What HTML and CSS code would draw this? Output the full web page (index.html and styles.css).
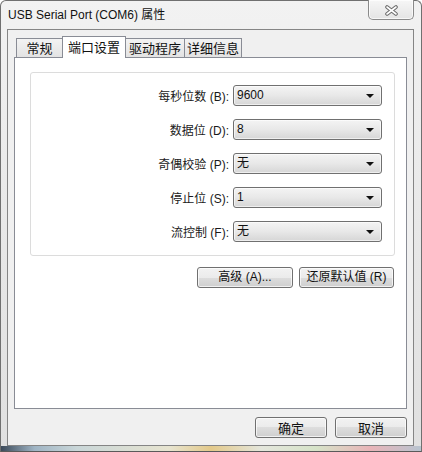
FILE: index.html
```html
<!DOCTYPE html>
<html>
<head>
<meta charset="utf-8">
<link rel="stylesheet" href="styles.css">
</head>
<body>
<div class="window">
  <div class="titlebar">
    <span class="title">USB Serial Port (COM6) 属性</span>
    <div class="close">
      <svg width="15" height="11" viewBox="0 0 15 11">
        <path d="M3 2 L12 9 M12 2 L3 9" stroke="#6a6a6a" stroke-width="3.6" stroke-linecap="round"/>
        <path d="M3 2 L12 9 M12 2 L3 9" stroke="#ffffff" stroke-width="1.6" stroke-linecap="round"/>
      </svg>
    </div>
  </div>
  <div class="client">
    <div class="tabs">
      <div class="tab t1">常规</div>
      <div class="tab t2 active">端口设置</div>
      <div class="tab t3">驱动程序</div>
      <div class="tab t4">详细信息</div>
    </div>
    <div class="page">
      <div class="panel">
        <div class="row"><span class="label">每秒位数 (B):</span><div class="combo"><span class="value">9600</span><i class="arrow"></i></div></div>
        <div class="row"><span class="label">数据位 (D):</span><div class="combo"><span class="value">8</span><i class="arrow"></i></div></div>
        <div class="row"><span class="label">奇偶校验 (P):</span><div class="combo"><span class="value">无</span><i class="arrow"></i></div></div>
        <div class="row"><span class="label">停止位 (S):</span><div class="combo"><span class="value">1</span><i class="arrow"></i></div></div>
        <div class="row"><span class="label">流控制 (F):</span><div class="combo"><span class="value">无</span><i class="arrow"></i></div></div>
      </div>
      <div class="actions">
        <button class="btn btn-adv">高级 (A)...</button>
        <button class="btn btn-reset">还原默认值 (R)</button>
      </div>
    </div>
    <div class="footer">
      <button class="btn btn-dlg">确定</button>
      <button class="btn btn-dlg">取消</button>
    </div>
  </div>
</div>
</body>
</html>
```

FILE: styles.css
```css
* { box-sizing: border-box; }

html, body {
  margin: 0;
  padding: 0;
  width: 422px;
  height: 452px;
  overflow: hidden;
  background: #ffffff;
}

body {
  font-family: "Liberation Sans", "Noto Sans CJK SC", sans-serif;
  font-size: 12px;
  color: #1a1a1a;
}

.window {
  width: 422px;
  height: 452px;
  border: 1px solid #707070;
  border-bottom-color: #5a5a5a;
  border-radius: 6px 6px 0 0;
  padding: 0 7px 5px 6px;
  background:
    linear-gradient(to right, #3c4a5a 0%, #9fb4c4 8%, #c9d6d8 18%, #e7e4d0 40%, #e3c98a 50%, #e4e6dc 62%, #d6e3c8 75%, #e8b4b8 88%, #b8c4d0 100%) bottom / 100% 5px no-repeat,
    linear-gradient(#f2f2f2, #e6e6e6 60%, #e0e0e0);
}

.titlebar {
  height: 28px;
  display: flex;
  justify-content: space-between;
  align-items: flex-start;
}

.title {
  padding-left: 1px;
  margin-top: 6px;
  font-family: "Liberation Sans", "Noto Sans CJK SC", sans-serif;
  font-size: 12px;
  line-height: 16px;
  color: #111;
}

.close {
  width: 46px;
  height: 20px;
  margin-top: -1px;
  border: 1px solid #8a8a8a;
  border-top: none;
  border-radius: 0 0 5px 5px;
  background: linear-gradient(#f6f6f6, #e4e4e4);
  box-shadow: inset 0 0 0 1px rgba(255,255,255,0.7);
  display: flex;
  align-items: center;
  justify-content: center;
}

.close svg { display: block; margin-top: 1px; }

.client {
  height: 417px;
  border: 1px solid #858585;
  background: #f0f0f0;
  padding: 6px 6px 0 6px;
}

.tabs {
  height: 21px;
  display: flex;
  align-items: flex-end;
  position: relative;
  z-index: 1;
}

.tab {
  height: 19px;
  border: 1px solid #898c95;
  border-bottom: none;
  background: linear-gradient(#f3f3f3, #e3e3e3);
  text-align: center;
  font-size: 13px;
  line-height: 18px;
  color: #111;
  font-family: "Noto Sans CJK SC", sans-serif;
}

.t1 { width: 47px; margin-left: 2px; }
.t2 { width: 64px; margin-left: -1px; margin-right: -1px; }
.t3 { width: 60px; }
.t4 { width: 58px; margin-left: -1px; }

.tab.active {
  height: 22px;
  margin-bottom: -1px;
  background: #ffffff;
  line-height: 19px;
  position: relative;
  z-index: 2;
}

.page {
  height: 352px;
  border: 1px solid #898c95;
  background: #ffffff;
  padding: 14px 11px 0 15px;
}

.panel {
  height: 184px;
  border: 1px solid #dcdcdc;
  border-radius: 3px;
  padding: 12px 12px 0 12px;
  display: flex;
  flex-direction: column;
  gap: 13px;
}

.row {
  display: flex;
  justify-content: flex-end;
  align-items: center;
  height: 21px;
}

.label {
  margin-right: 4px;
  font-size: 12px;
  color: #1a1a1a;
}

.combo {
  width: 149px;
  height: 21px;
  border: 1px solid #707070;
  border-radius: 3px;
  background: linear-gradient(#f4f4f4 0%, #e8e8e8 50%, #d6d6d6 100%);
  box-shadow: inset 0 0 0 1px rgba(255,255,255,0.6);
  display: flex;
  align-items: center;
  justify-content: space-between;
  padding: 0 7px 0 3px;
}

.value {
  font-size: 12px;
  color: #111;
  line-height: 19px;
}

.arrow {
  width: 0;
  height: 0;
  border-left: 4px solid transparent;
  border-right: 4px solid transparent;
  border-top: 4px solid #111;
  margin-top: 1px;
}

.actions {
  display: flex;
  justify-content: flex-end;
  gap: 6px;
  margin-top: 11px;
  padding-right: 1px;
}

.btn {
  height: 21px;
  padding: 0;
  border: 1px solid #707070;
  border-radius: 3px;
  background: linear-gradient(#f2f2f2 0%, #ebebeb 50%, #dddddd 50%, #cfcfcf 100%);
  box-shadow: inset 0 0 0 1px rgba(255,255,255,0.7);
  font-family: "Liberation Sans", "Noto Sans CJK SC", sans-serif;
  font-size: 12px;
  color: #111;
  line-height: 19px;
}

.btn-adv { width: 96px; }
.btn-reset { width: 95px; }

.footer {
  display: flex;
  justify-content: flex-end;
  gap: 8px;
  margin-top: 8px;
}

.btn-dlg {
  width: 72px;
  font-size: 13px;
  font-family: "Noto Sans CJK SC", sans-serif;
}
```
